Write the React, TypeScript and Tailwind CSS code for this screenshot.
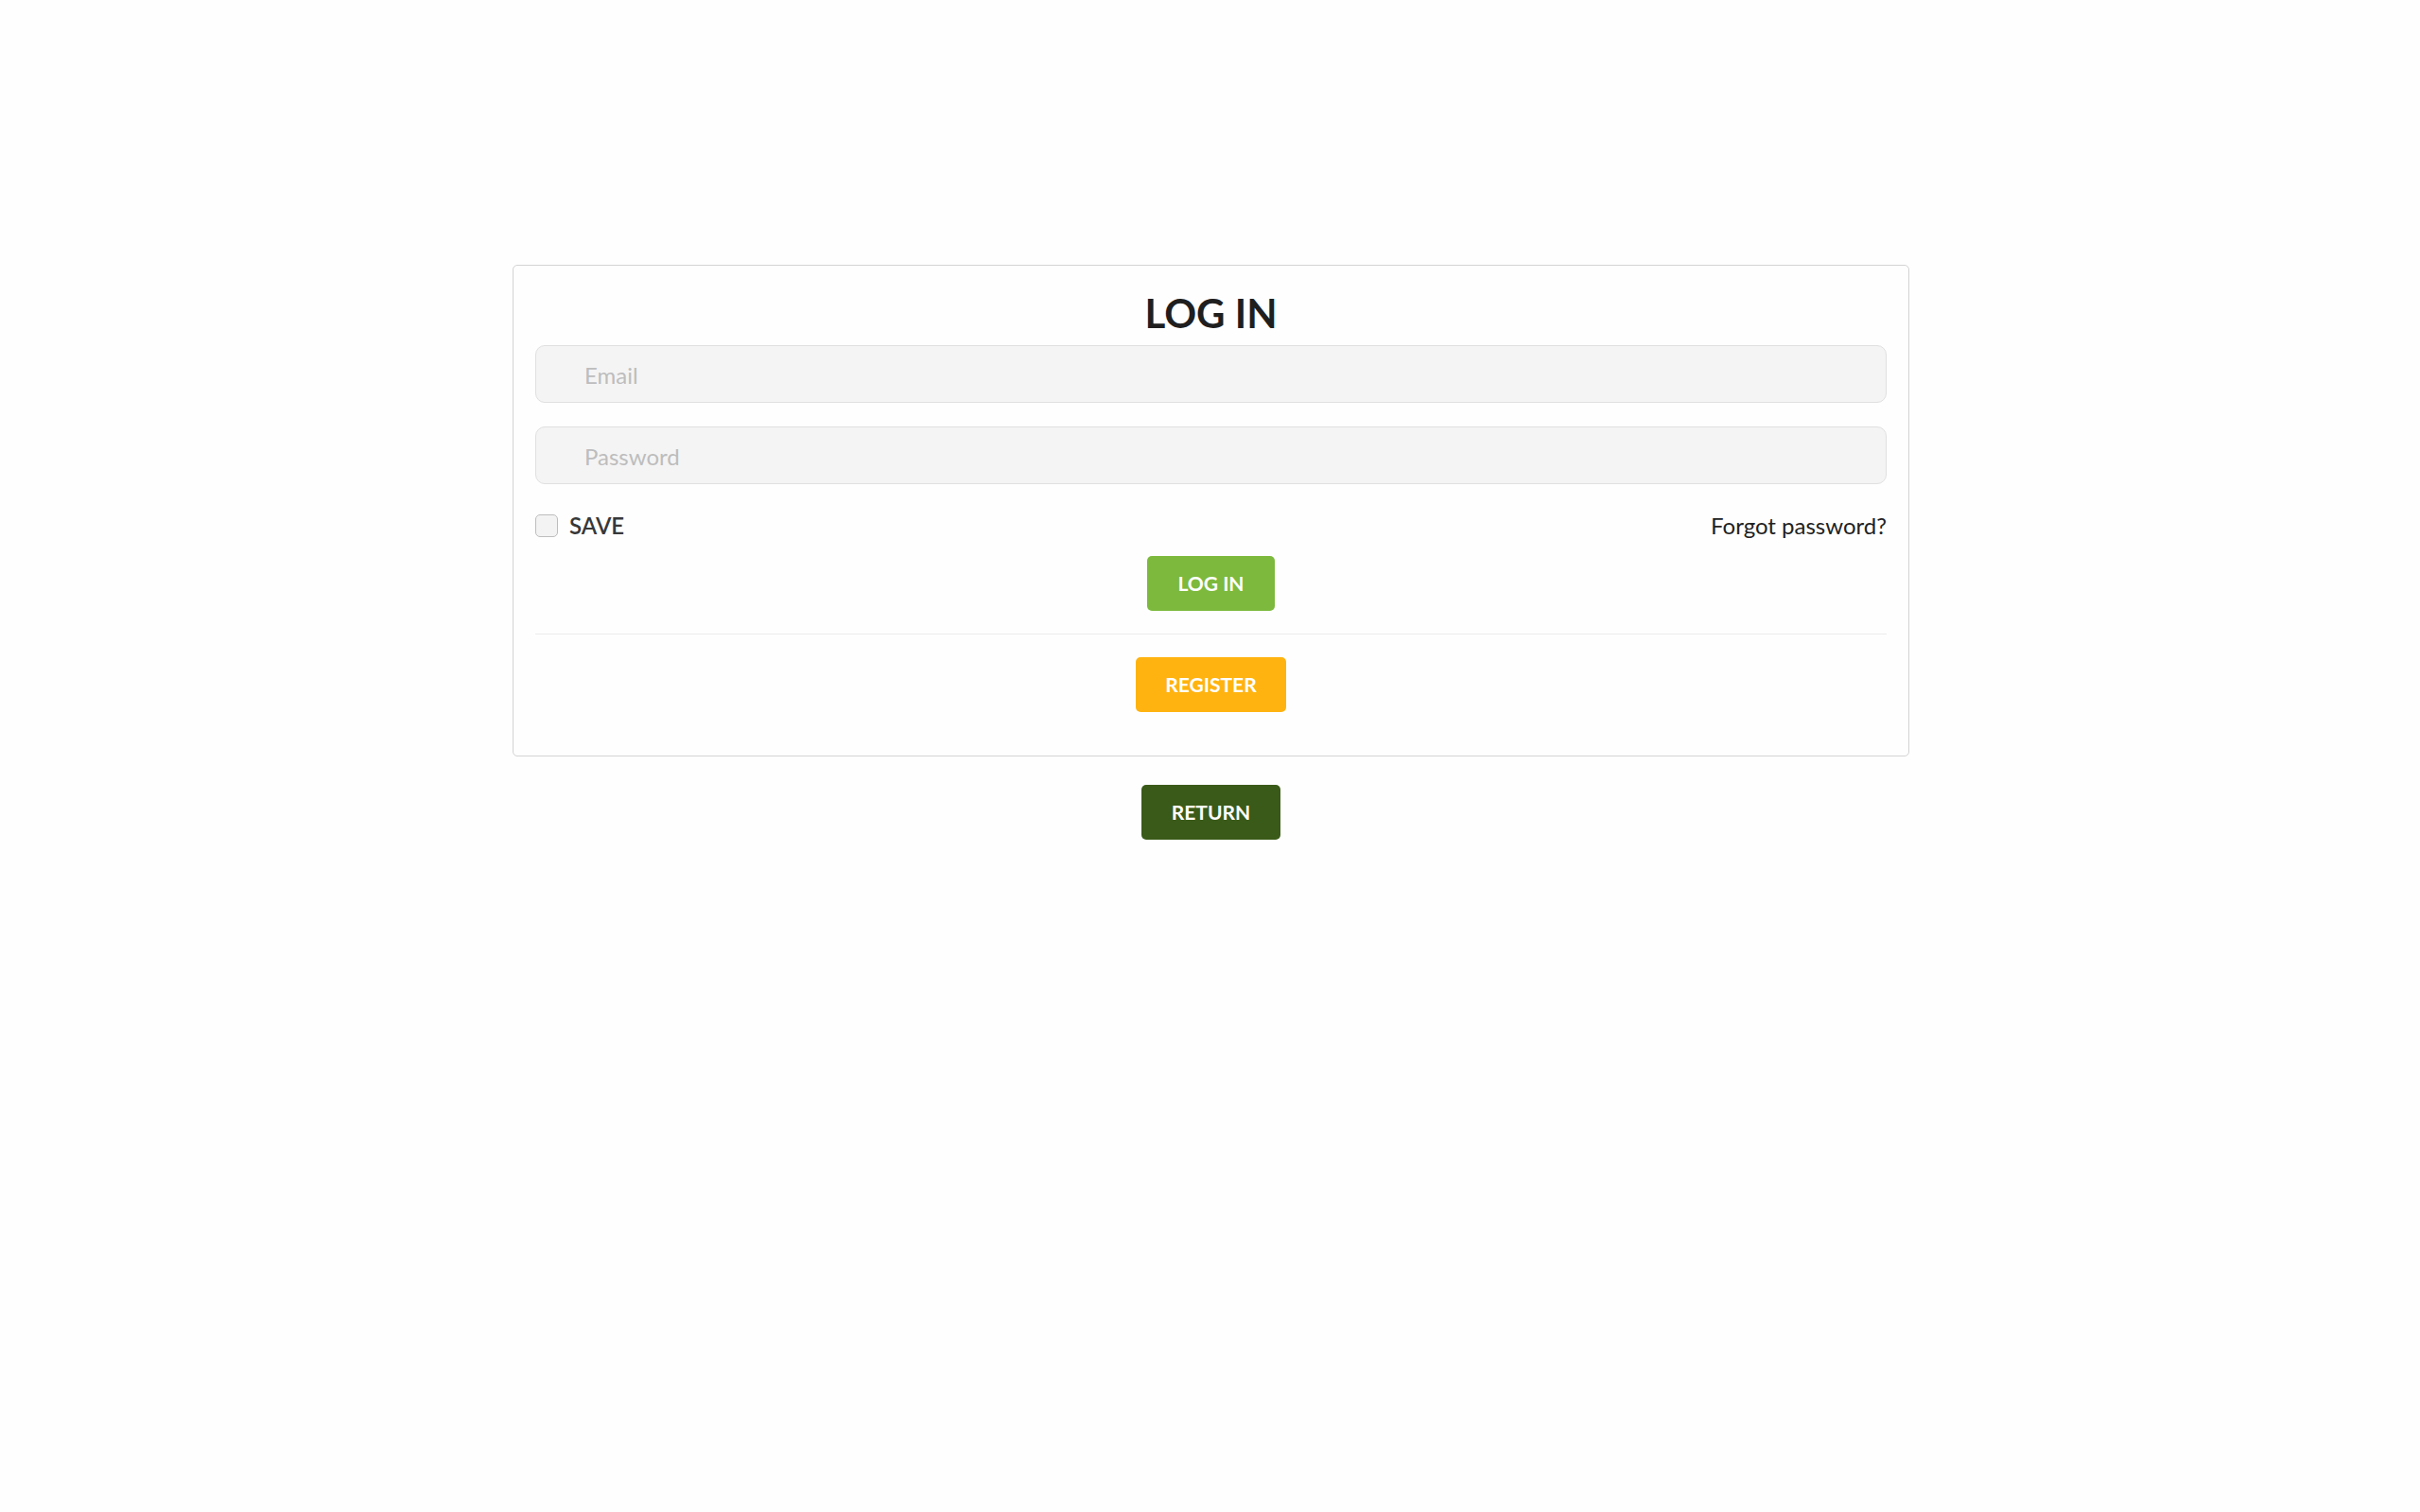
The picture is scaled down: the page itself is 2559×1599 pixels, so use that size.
import { useState } from "react";

export default function App() {
  const [save, setSave] = useState(false);

  return (
    <div className="min-h-screen w-full bg-[#fefefe] pt-[280px] font-['Lato','Open_Sans',sans-serif] text-[#222]">
      <div className="mx-auto w-[1477px] translate-x-[1px]">
        {/* login card */}
        <form
          className="flex flex-col rounded-[5px] border border-[#d3d3d3] px-[23px] pt-[29px] pb-[46px]"
          onSubmit={(e) => e.preventDefault()}
        >
          <h2 className="h-[42px] text-center text-[42px] leading-[42px] font-bold text-[#1f1f1f]">
            LOG IN
          </h2>

          <input
            type="email"
            placeholder="Email"
            className="mt-[13px] h-[61px] w-full rounded-[10px] border border-[#e0e0e0] bg-[#f4f4f4] pt-[2px] pl-[51px] text-[24px] text-[#333] outline-none placeholder:text-[#bdbdbd]"
          />
          <input
            type="password"
            placeholder="Password"
            className="mt-[25px] h-[61px] w-full rounded-[10px] border border-[#e0e0e0] bg-[#f4f4f4] pt-[2px] pl-[51px] text-[24px] text-[#333] outline-none placeholder:text-[#bdbdbd]"
          />

          <div className="mt-[29px] flex h-[30px] items-center justify-between">
            <label className="flex cursor-pointer items-center gap-[12px]">
              <span
                onClick={() => setSave(!save)}
                className={
                  save
                    ? "h-[24px] w-[24px] rounded-[5px] border border-[#7cb93c] bg-[#7cb93c]"
                    : "h-[24px] w-[24px] rounded-[5px] border border-[#bdbdbd] bg-[#f3f3f3]"
                }
              />
              <span className="text-[24px] leading-[30px] font-semibold text-[#383838]">
                SAVE
              </span>
            </label>
            <a href="#" className="text-[24px] leading-[30px] text-[#222]">
              Forgot password?
            </a>
          </div>

          <div className="mt-[17px] flex justify-center">
            <button
              type="submit"
              className="h-[58px] w-[135px] rounded-[5px] bg-[#7cb93c] text-[21px] font-bold text-white"
            >
              LOG IN
            </button>
          </div>

          <div className="mt-[24px] h-px w-full bg-[#ececec]" />

          <div className="mt-[24px] flex justify-center">
            <button
              type="button"
              className="h-[58px] w-[159px] rounded-[5px] bg-[#ffb310] text-[21px] font-bold text-white"
            >
              REGISTER
            </button>
          </div>
        </form>

        <div className="mt-[30px] flex justify-center">
          <button
            type="button"
            className="h-[58px] w-[147px] rounded-[5px] bg-[#3a5a19] text-[21px] font-bold text-white"
          >
            RETURN
          </button>
        </div>
      </div>
    </div>
  );
}
